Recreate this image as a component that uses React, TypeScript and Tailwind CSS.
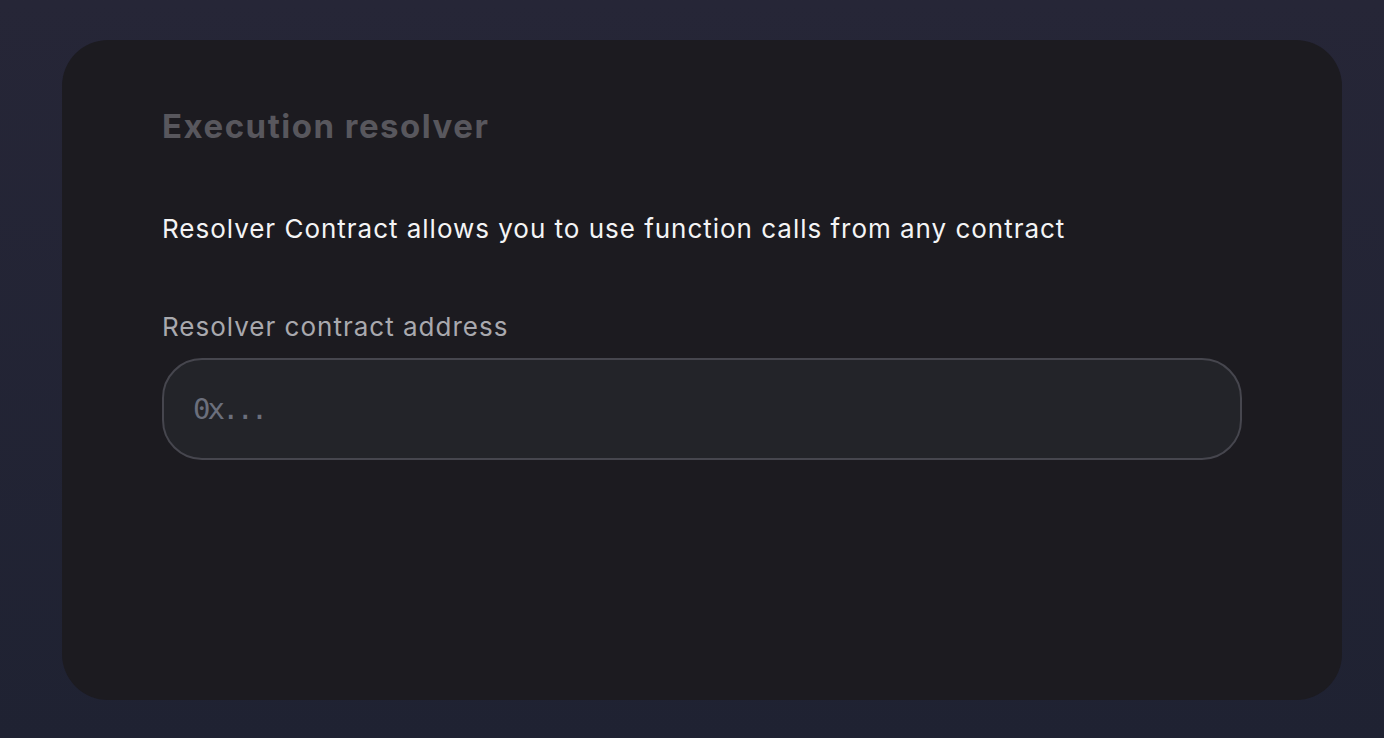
export default function App() {
  return (
    <div className="min-h-screen w-full bg-gradient-to-b from-[#262637] to-[#1f2232] pl-[62px] pt-10 font-['Inter',sans-serif]">
      <section className="flex h-[660px] w-[1280px] flex-col rounded-[46px] bg-[#1c1b20] px-[100px] pt-[66px]">
        <h2 className="text-[33px] leading-10 font-bold tracking-[1.5px] text-[#58575d]">Execution resolver</h2>

        <p className="mt-[65px] text-[26px] leading-9 tracking-[0.98px] text-[#f4f4f5]">
          Resolver Contract allows you to use function calls from any contract
        </p>

        <label className="mt-[62px] flex flex-col gap-[13px]">
          <span className="text-[26px] leading-9 tracking-[1px] text-[#a9a9ae]">Resolver contract address</span>
          <input
            type="text"
            placeholder="0x..."
            className="h-[102px] w-full rounded-[40px] border-2 border-[#46464e] bg-[#232429] px-[29px] font-['DejaVu_Sans_Mono',monospace] text-[29px] tracking-[-3px] text-white outline-none placeholder:text-[#6b6f7c]"
          />
        </label>
      </section>
    </div>
  );
}
